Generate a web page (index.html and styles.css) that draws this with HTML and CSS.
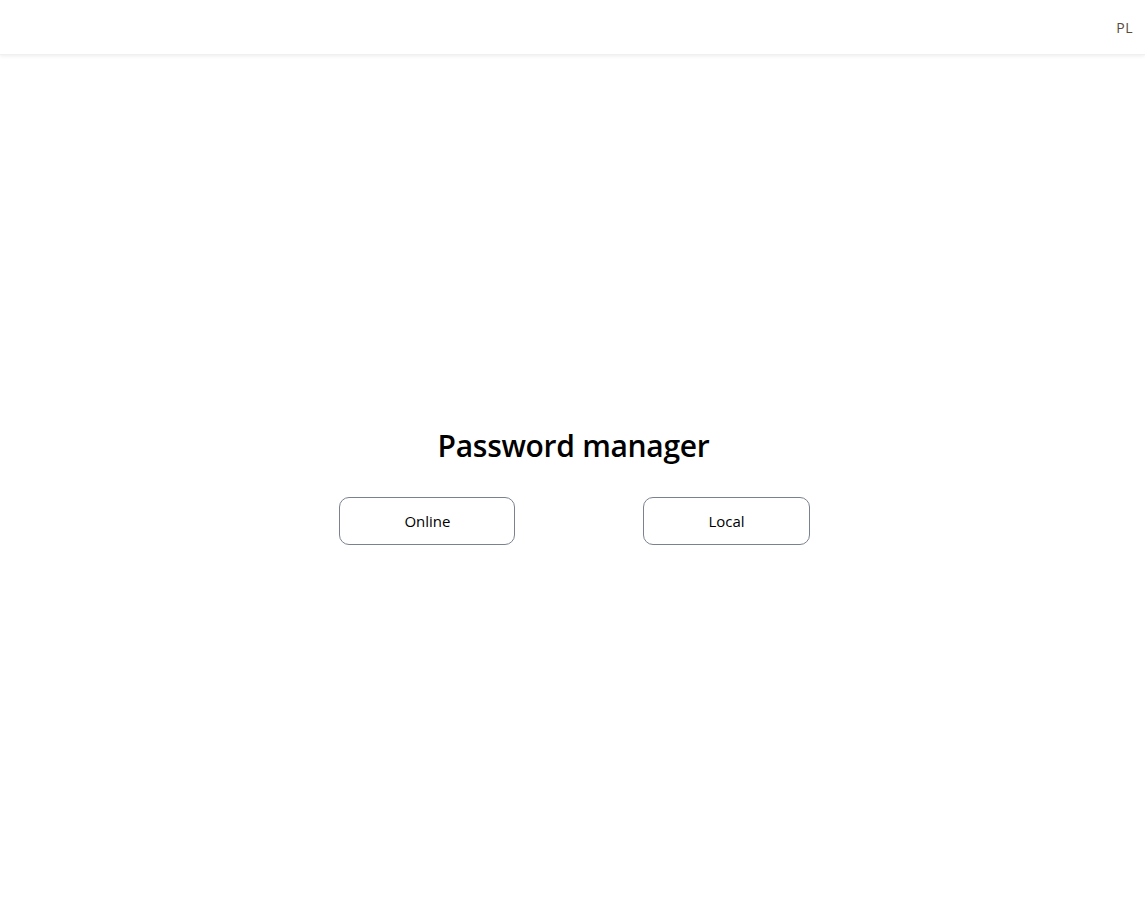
FILE: index.html
```html
<!DOCTYPE html>
<html>
<head>
<meta charset="utf-8">
<link rel="stylesheet" href="styles.css">
</head>
<body>
<header class="topbar">
  <span class="lang">PL</span>
</header>
<main class="main">
  <h1 class="title">Password manager</h1>
  <div class="actions">
    <button class="btn">Online</button>
    <button class="btn">Local</button>
  </div>
</main>
</body>
</html>
```
FILE: styles.css
```css
* { box-sizing: border-box; }
html, body { margin: 0; padding: 0; background: #fff; }
body { font-family: "Open Sans", "Noto Sans", sans-serif; color: #000; }
.topbar {
  height: 55px;
  display: flex;
  align-items: center;
  justify-content: flex-end;
  padding: 0 12px 0 0;
  box-shadow: 0 1px 4px rgba(0,0,0,0.08);
  border-bottom: 1px solid #f0f0f0;
}
.lang { font-size: 14px; color: #5a4a3a; letter-spacing: 0.5px; }
.main {
  height: calc(100vh - 55px);
  display: flex;
  flex-direction: column;
  align-items: center;
  justify-content: center;
  padding-top: 13px;
}
.title {
  margin: 0 0 31px;
  font-size: 30px;
  font-weight: 600;
  letter-spacing: -0.3px;
  padding-left: 2px;
}
.actions { display: flex; gap: 128px; padding-left: 4px; }
.btn {
  height: 48px;
  padding: 0 64px;
  background: #fff;
  border: 1px solid #7a8290;
  border-radius: 10px;
  font-family: inherit;
  font-size: 15px;
  color: #000;
}
```
